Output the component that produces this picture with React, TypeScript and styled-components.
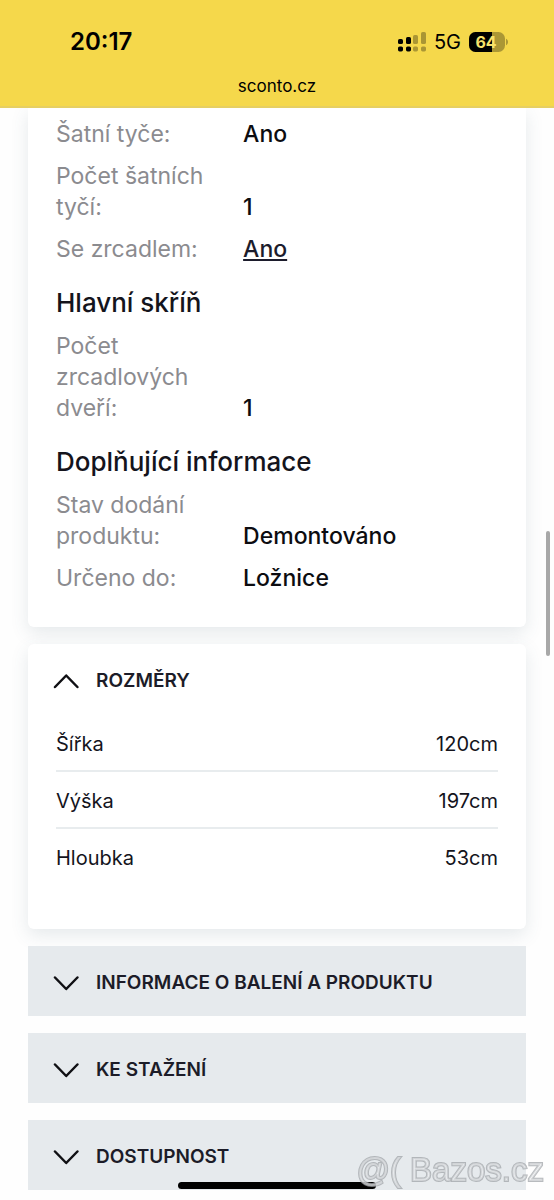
import React, { useState } from "react";
import styled, { createGlobalStyle, css } from "styled-components";

const GlobalStyle = createGlobalStyle`
  *, *::before, *::after { box-sizing: border-box; }
  body {
    margin: 0;
    background: #fefefe;
    color: #14141c;
    font-family: Inter, "Noto Sans", sans-serif;
  }
  h2, h3, dl, dd, p { margin: 0; }
`;

const Page = styled.div`
  position: relative;
  min-height: 100vh;
  overflow: hidden;
`;

const BrowserBar = styled.header`
  position: relative;
  z-index: 1;
  display: flex;
  flex-direction: column;
  height: 108px;
  padding-top: 26px;
  background: #f5d84b;
  border-bottom: 2px solid #e6cf62;
  color: #000;
`;

const StatusRow = styled.div`
  display: flex;
  align-items: center;
  justify-content: space-between;
  height: 32px;
  padding: 0 46px 0 70px;
`;

const Clock = styled.time`
  font-size: 24px;
  font-weight: 600;
  line-height: 32px;
`;

const StatusIcons = styled.div`
  display: flex;
  align-items: center;
  gap: 8px;
`;

const Network = styled.span`
  font-size: 20px;
  line-height: 32px;
`;

const Address = styled.p`
  margin-top: 17px;
  font-size: 17px;
  line-height: 22px;
  text-align: center;
`;

const Content = styled.main`
  display: flex;
  flex-direction: column;
  gap: 17px;
  padding: 0 28px 9px;
`;

const cardLook = css`
  background: #fff;
  box-shadow: 0 6px 18px rgba(60, 90, 110, 0.13);
`;

const SpecCard = styled.section`
  ${cardLook}
  padding: 11px 28px 33px;
  border-radius: 0 0 6px 6px;
`;

const SpecTitle = styled.h3`
  margin: 20px 0 10px;
  font-size: 26px;
  font-weight: 500;
  line-height: 36px;
`;

const SpecList = styled.dl`
  display: flex;
  flex-direction: column;
  gap: 11px;
`;

const SpecRow = styled.div`
  display: grid;
  grid-template-columns: 36% 1fr;
  column-gap: 28px;
  align-items: end;
  font-size: 23px;
  line-height: 31px;
`;

const SpecLabel = styled.dt`
  color: #8b8b8f;
`;

const SpecValue = styled.dd`
  color: #0c0c10;
  font-weight: 500;
`;

const SpecLink = styled.a`
  color: #1c1c2c;
  text-decoration: underline;
  text-decoration-thickness: 2px;
  text-underline-offset: 2px;
`;

const Panel = styled.section<{ $open: boolean }>`
  ${({ $open }) =>
    $open
      ? css`
          ${cardLook}
          border-radius: 6px;
        `
      : css`
          background: #e6eaed;
        `}
`;

const PanelToggle = styled.button`
  display: flex;
  align-items: center;
  gap: 17px;
  width: 100%;
  height: 70px;
  padding: 4px 26px 0 25px;
  border: 0;
  background: none;
  color: #1c1c28;
  font: inherit;
  font-size: 19px;
  font-weight: 600;
  line-height: 28px;
  text-align: left;
  text-transform: uppercase;
  cursor: pointer;
`;

const PanelBody = styled.div`
  padding: 1px 28px 43px;
`;

const SizeTable = styled.table`
  width: 100%;
  border-spacing: 0;
  font-size: 20px;
  line-height: 30px;

  th, td {
    padding: 14px 0 11px;
    border-bottom: 2px solid #e8ecee;
    font-weight: 400;
    text-align: left;
  }
  td { text-align: right; }
  tr:last-child > * { border-bottom-color: transparent; }
`;

const ScrollThumb = styled.div`
  position: absolute;
  z-index: 2;
  top: 531px;
  right: 4px;
  width: 4px;
  height: 125px;
  border-radius: 2px;
  background: #a8a8a8;
`;

const HomeIndicator = styled.div`
  position: fixed;
  z-index: 2;
  bottom: 11px;
  left: 50%;
  width: 198px;
  height: 7px;
  border-radius: 4px;
  background: #000;
  transform: translateX(-50%);
`;

const Watermark = styled.div`
  position: fixed;
  z-index: 3;
  right: 10px;
  bottom: 11px;
  color: rgba(240, 242, 244, 0.5);
  font-family: "Liberation Sans", Arial, sans-serif;
  font-size: 33px;
  line-height: 38px;
  white-space: pre;
  paint-order: stroke;
  -webkit-text-stroke: 2px rgba(160, 164, 168, 0.75);
`;

function SignalIcon() {
  const bars = [
    { x: 0, y: 7, h: 5 },
    { x: 8, y: 5, h: 7 },
    { x: 15, y: 3, h: 9 },
    { x: 23, y: 0, h: 12 },
  ];
  return (
    <svg width="28" height="20" viewBox="0 0 28 20" aria-hidden="true">
      {bars.map(({ x, y, h }, i) => (
        <g key={x} fill="#000" opacity={i < 2 ? 1 : 0.3}>
          <rect x={x} y={y} width="5" height={h} rx="1.6" />
          <rect x={x} y="14.4" width="5" height="5" rx="1.6" />
        </g>
      ))}
    </svg>
  );
}

function BatteryIcon() {
  return (
    <svg width="39" height="20" viewBox="0 0 39 20" role="img" aria-label="64 %">
      <defs>
        <clipPath id="charge">
          <rect width="23" height="20" />
        </clipPath>
      </defs>
      <rect width="36" height="20" rx="6.5" fill="#ab9735" />
      <rect width="36" height="20" rx="6.5" fill="#000" clipPath="url(#charge)" />
      <path d="M37 6.800c1.200.5 2 1.700 2 3.200s-.8 2.700-2 3.200z" fill="#ab9735" />
      <text
        x="17"
        y="16"
        textAnchor="middle"
        fontFamily="Inter, sans-serif"
        fontSize="16"
        fontWeight="700"
        fill="#f8e36b"
      >
        64
      </text>
    </svg>
  );
}

function Chevron({ up }: { up: boolean }) {
  return (
    <svg width="26" height="16" viewBox="0 0 26 16" fill="none" aria-hidden="true">
      <path
        d={up ? "M2 14 13.200 2.500 24.400 14" : "M2 2.500 13.200 14 24.400 2.500"}
        stroke="#101014"
        strokeWidth="2.500"
        strokeLinecap="round"
        strokeLinejoin="round"
      />
    </svg>
  );
}

function Spec({ label, children }: { label: string; children: React.ReactNode }) {
  return (
    <SpecRow>
      <SpecLabel>{label}</SpecLabel>
      <SpecValue>{children}</SpecValue>
    </SpecRow>
  );
}

function Accordion({
  title,
  initiallyOpen = false,
  children,
}: {
  title: string;
  initiallyOpen?: boolean;
  children?: React.ReactNode;
}) {
  const [open, setOpen] = useState(initiallyOpen);
  return (
    <Panel $open={open}>
      <h2>
        <PanelToggle type="button" aria-expanded={open} onClick={() => setOpen(!open)}>
          <Chevron up={open} />
          {title}
        </PanelToggle>
      </h2>
      {open && children && <PanelBody>{children}</PanelBody>}
    </Panel>
  );
}

const sizes = [
  ["Šířka", "120cm"],
  ["Výška", "197cm"],
  ["Hloubka", "53cm"],
];

export default function App() {
  return (
    <Page>
      <GlobalStyle />
      <BrowserBar>
        <StatusRow>
          <Clock>20:17</Clock>
          <StatusIcons>
            <SignalIcon />
            <Network>5G</Network>
            <BatteryIcon />
          </StatusIcons>
        </StatusRow>
        <Address>sconto.cz</Address>
      </BrowserBar>

      <Content>
        <SpecCard>
          <SpecList>
            <Spec label="Šatní tyče:">Ano</Spec>
            <Spec label="Počet šatních tyčí:">1</Spec>
            <Spec label="Se zrcadlem:">
              <SpecLink href="#zrcadlo">Ano</SpecLink>
            </Spec>
          </SpecList>
          <SpecTitle>Hlavní skříň</SpecTitle>
          <SpecList>
            <Spec label="Počet zrcadlových dveří:">1</Spec>
          </SpecList>
          <SpecTitle>Doplňující informace</SpecTitle>
          <SpecList>
            <Spec label="Stav dodání produktu:">Demontováno</Spec>
            <Spec label="Určeno do:">Ložnice</Spec>
          </SpecList>
        </SpecCard>

        <Accordion title="Rozměry" initiallyOpen>
          <SizeTable>
            <tbody>
              {sizes.map(([name, value]) => (
                <tr key={name}>
                  <th scope="row">{name}</th>
                  <td>{value}</td>
                </tr>
              ))}
            </tbody>
          </SizeTable>
        </Accordion>
        <Accordion title="Informace o balení a produktu" />
        <Accordion title="Ke stažení" />
        <Accordion title="Dostupnost" />
      </Content>

      <ScrollThumb />
      <HomeIndicator />
      <Watermark>@( Bazos.cz</Watermark>
    </Page>
  );
}
